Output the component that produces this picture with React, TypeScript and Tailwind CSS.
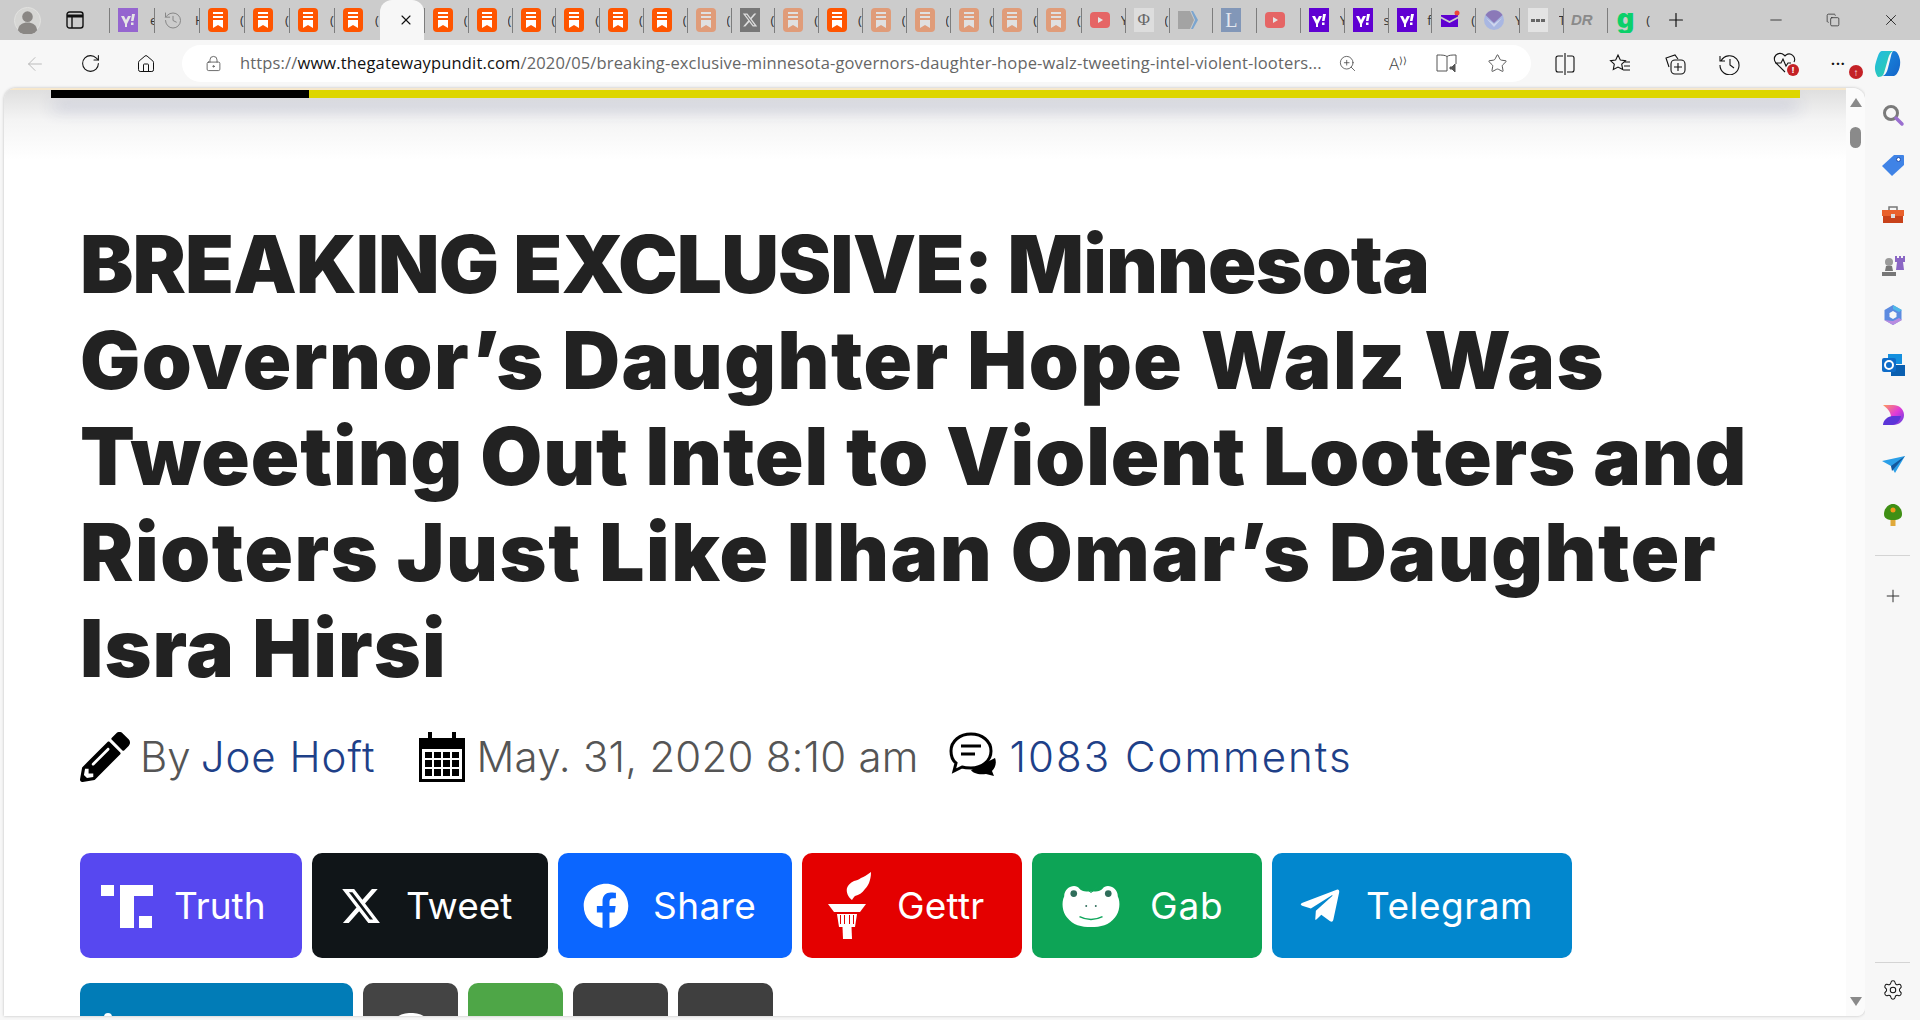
import React from "react";
import { ArrowLeft, RotateCw, House, LockKeyhole, ZoomIn, Star, Settings, Plus, X, Minus, History, Copy } from "lucide-react";
import { FaFacebook, FaTelegramPlane, FaPencilAlt } from "react-icons/fa";
import { FaXTwitter } from "react-icons/fa6";

function Bookmark({ faded }: { faded?: boolean }) {
  return (
    <svg viewBox="0 0 20 24" className={`h-6 w-5 ${faded ? "opacity-40" : ""}`}>
      <rect width="20" height="24" rx="4" fill="#ff5500" />
      <path d="M5 4h10v2H5zM5 8h10v2H5zM5 12h10v8l-5-3-5 3z" fill="#fff" />
    </svg>
  );
}
function Yahoo({ faded }: { faded?: boolean }) {
  return (
    <svg viewBox="0 0 20 24" className={`h-6 w-5 ${faded ? "opacity-50" : ""}`}>
      <rect width="20" height="24" fill="#6001d2" />
      <path d="M3 8h3l2 4 2-4h3l-4 8v3H7v-3zM14 6h3l-1.500 7h-2.500zM13 14.500h2.500v2.500H13z" fill="#fff" />
    </svg>
  );
}
function Yt() {
  return (
    <svg viewBox="0 0 20 24" className="h-6 w-5 opacity-50">
      <rect y="4" width="20" height="16" rx="4" fill="#f00" />
      <path d="M8 9l5 3-5 3z" fill="#fff" />
    </svg>
  );
}
function Favicon({ k }: { k: string }) {
  switch (k) {
    case "o": return <Bookmark />;
    case "f": return <Bookmark faded />;
    case "ya": return <Yahoo faded />;
    case "y": return <Yahoo />;
    case "yt": return <Yt />;
    case "h": return <History size={21} strokeWidth={1.100} className="text-[#808080]" />;
    case "x":
      return <span className="flex h-6 w-5 items-center justify-center bg-[#777] text-[#ddd]"><FaXTwitter size={16} /></span>;
    case "phi":
      return <span className="flex h-6 w-5 items-center justify-center bg-[#ddd] font-['Liberation_Serif',serif] text-[17px] text-[#666]">Φ</span>;
    case "arrow":
      return (
        <svg viewBox="0 0 20 24" className="h-6 w-5">
          <path d="M0 3h12l4 9-4 9H0z" fill="#a3a3a3" />
          <path d="M13 3h2l5 9-5 9h-2l4-9z" fill="#7ba5cf" />
        </svg>
      );
    case "L":
      return <span className="flex h-6 w-5 items-center justify-center bg-[#8297b8] font-['Liberation_Serif',serif] text-[20px] leading-none text-[#e4e8ef]">L</span>;
    case "mail":
      return (
        <svg viewBox="0 0 20 24" className="h-6 w-5">
          <path d="M1 7h17v1.500L9.500 13 1 8.500zM1 10.500L9.500 15 18 10.500V19H1z" fill="#5f01d1" />
          <circle cx="17" cy="5" r="2.500" fill="#f0443a" />
        </svg>
      );
    case "noaa":
      return (
        <svg viewBox="0 0 20 24" className="h-6 w-5">
          <circle cx="10" cy="12" r="10" fill="#a9b7e2" />
          <path d="M1.500 7A10 10 0 0 1 18.500 7L10 15z" fill="#8b79b8" />
          <path d="M2 10l8 6 8-6-8 9z" fill="#cfd6ee" />
        </svg>
      );
    case "dots":
      return (
        <span className="flex h-6 w-5 items-center justify-center gap-[1px] bg-[#e3e3e3]">
          <i className="h-[3px] w-[4px] bg-[#666]" /><i className="h-[3px] w-[4px] bg-[#666]" /><i className="h-[3px] w-[4px] bg-[#666]" />
        </span>
      );
    case "dr":
      return <span className="font-['Liberation_Sans',sans-serif] text-[15px] font-bold italic text-[#8a8a8a]">DR</span>;
    case "g":
      return <span className="font-['Inter',sans-serif] text-[27px] font-black leading-none text-[#0bd06a] -translate-y-[2px]">g</span>;
    default: return null;
  }
}

const tabs: [string, string][] = [
  ["ya", "e"], ["h", "H"], ["o", "("], ["o", "("], ["o", "("], ["o", "("],
];
const tabs2: [string, string][] = [
  ["o", "("], ["o", "("], ["o", "("], ["o", "("], ["o", "("], ["o", "("], ["f", "("], ["x", "("], ["f", "("], ["o", "("],
  ["f", "("], ["f", "("], ["f", "("], ["f", "("], ["f", "("], ["yt", "Y"], ["phi", "("], ["arrow", ""], ["L", ""], ["yt", ""],
  ["y", "Y"], ["y", "s"], ["y", "f"], ["mail", "("], ["noaa", "Y"], ["dots", "T"], ["dr", ""], ["g", "("],
];

function Tab({ k, g, wide }: { k: string; g: string; wide?: boolean }) {
  return (
    <div className={`flex h-[25px] items-center overflow-hidden border-l border-[#7d7d7d] pl-2 ${wide ? "w-[45px]" : "w-[43.800px]"}`}>
      <span className="flex w-5 shrink-0 items-center justify-center"><Favicon k={k} /></span>
      <span className="ml-auto w-[4px] overflow-hidden font-['Open_Sans',sans-serif] text-[13px] leading-none text-[#333]">{g}</span>
    </div>
  );
}

function TabStrip() {
  return (
    <div className="flex h-10 shrink-0 items-center bg-[#cccccc]">
      <svg viewBox="0 0 28 28" className="ml-[14px] h-[27px] w-[27px]">
        <circle cx="14" cy="14" r="13.500" fill="#d6d6d4" stroke="#e2e2e0" />
        <circle cx="14" cy="10" r="5.500" fill="#8a8784" />
        <path d="M4 24c1-6 5-8 10-8s9 2 10 8a13 13 0 0 1-20 0z" fill="#8a8784" />
      </svg>
      <svg viewBox="0 0 18 18" fill="none" stroke="#111" strokeWidth="1.400" className="ml-[25px] h-[18px] w-[18px]">
        <rect x="1" y="1" width="16" height="16" rx="2.500" />
        <path d="M1 5h16" strokeWidth="3" />
        <path d="M6 5v12" />
      </svg>
      <span className="w-[25px]" />
      {tabs.map(([k, g], i) => <Tab key={i} k={k} g={g} wide />)}
      <div className="ml-[1px] flex h-10 w-[44px] items-center justify-center rounded-t-xl bg-[#f7f7f7] pl-2">
        <X size={16} strokeWidth={1.700} className="text-[#111]" />
      </div>
      {tabs2.map(([k, g], i) => <Tab key={i} k={k} g={g} />)}
      <Plus size={22} strokeWidth={1.300} className="ml-[15px] text-[#111]" />
      <Minus size={18} strokeWidth={1} className="ml-[80px] text-[#111]" />
      <Copy size={14} strokeWidth={1.100} className="ml-[41px] text-[#111]" />
      <X size={18} strokeWidth={1.100} className="ml-[42px] text-[#111]" />
    </div>
  );
}

function Toolbar() {
  return (
    <div className="flex h-[48px] shrink-0 items-center bg-[#f7f7f7] pb-[1px]">
      <ArrowLeft size={22} strokeWidth={1} className="ml-[24px] text-[#b5b5b5]" />
      <RotateCw size={21} strokeWidth={1.200} className="ml-[34px] text-[#111]" />
      <House size={20} strokeWidth={1.200} className="ml-[35px] text-[#111]" />
      <div className="ml-[26px] flex h-[37px] w-[1349px] items-center rounded-full bg-white pl-[23px]">
        <LockKeyhole size={17} strokeWidth={1.100} className="text-[#444]" />
        <span className="ml-[18px] w-[1087px] overflow-hidden whitespace-nowrap font-['Open_Sans',sans-serif] text-[16.500px] tracking-[0.15px] text-[#666]">
          https://<span className="text-[#111]">www.thegatewaypundit.com</span>/2020/05/breaking-exclusive-minnesota-governors-daughter-hope-walz-tweeting-intel-violent-looters...
        </span>
        <ZoomIn size={19} strokeWidth={1} className="ml-[11px] text-[#444]" />
        <span className="ml-[32px] font-['Open_Sans',sans-serif] text-[17px] font-light leading-none text-[#444]">A<span className="text-[10px] align-top">⟩⟩</span></span>
        <svg viewBox="0 0 22 20" fill="none" stroke="#555" strokeWidth="1" className="ml-[29px] h-5 w-[22px]">
          <path d="M11 2.500C9 1 6 1 1 1v16h10V2.500c2-1.500 5-1.500 9-1.500v9" />
          <path d="M14 13h2l3-3v8l-3-3h-2z" fill="#555" />
        </svg>
        <Star size={21} strokeWidth={1} className="ml-[29px] text-[#444]" />
      </div>
      <svg viewBox="0 0 20 22" fill="none" stroke="#111" strokeWidth="1.100" className="ml-[24px] h-[22px] w-5">
        <path d="M8 3H3a2 2 0 0 0-2 2v12a2 2 0 0 0 2 2h5M12 3h5a2 2 0 0 1 2 2v12a2 2 0 0 1-2 2h-5M10 0v22" />
      </svg>
      <svg viewBox="0 0 22 22" fill="none" stroke="#111" strokeWidth="1.100" className="ml-[34px] h-[22px] w-[22px]">
        <path d="M9 2l2.300 5 5.200.6-3.800 3.600 1 5.300L9 14l-4.700 2.500 1-5.300L1.500 7.600 6.700 7zM15 9h6M15 13h6M14 17h7" />
      </svg>
      <svg viewBox="0 0 22 22" fill="none" stroke="#111" strokeWidth="1.100" className="ml-[33px] h-[22px] w-[22px]">
        <path d="M5 14L2 5l9-3 3 4" />
        <rect x="7" y="7" width="14" height="14" rx="4" />
        <path d="M14 10v8M10 14h8" />
      </svg>
      <svg viewBox="0 0 22 22" fill="none" stroke="#111" strokeWidth="1.100" className="ml-[32px] h-[22px] w-[22px]">
        <path d="M2 3v5h5M3 8a9.500 9.500 0 1 1-1 4M12 6v6l4 3" />
      </svg>
      <div className="relative ml-[33px] h-[24px] w-[24px]">
        <svg viewBox="0 0 24 22" fill="none" stroke="#111" strokeWidth="1.100" className="h-[22px] w-[24px]">
          <path d="M12 20L3 11a5.500 5.500 0 0 1 8-8l1 1 1-1a5.500 5.500 0 0 1 8 7M2 11h6l2-4 3 7 2-3h3" />
        </svg>
        <span className="absolute bottom-0 right-[-2px] flex h-3 w-3 items-center justify-center rounded-full bg-[#c42126] text-[9px] font-bold leading-none text-white">!</span>
      </div>
      <div className="relative ml-[34px] flex h-[24px] w-[26px] items-center">
        <span className="text-[14px] font-bold leading-none tracking-[1px] text-[#111]">···</span>
        <span className="absolute bottom-[-3px] right-[-6px] flex h-[14px] w-[14px] items-center justify-center rounded-full bg-[#c42126] text-[10px] font-bold leading-none text-white">↑</span>
      </div>
      <svg viewBox="0 0 26 32" className="ml-[16px] h-8 w-[28px]">
        <defs>
          <linearGradient id="cp1" x1="0" y1="0" x2="1" y2="1"><stop offset="0" stopColor="#22b8e6" /><stop offset="1" stopColor="#2ed3a0" /></linearGradient>
          <linearGradient id="cp2" x1="0" y1="0" x2="1" y2="1"><stop offset="0" stopColor="#1a8be0" /><stop offset="1" stopColor="#1464c8" /></linearGradient>
        </defs>
        <path d="M8 3h12c-3 0-5 4-6 8l-4 14c-1 3-3 4-6 4-3-4-4-9-2-15 2-6 3-11 6-11z" fill="url(#cp1)" />
        <path d="M20 3c3 0 5 4 6 9 1 6-2 15-6 16H8c3 0 5-4 6-8l3-12c.5-3 1.500-5 3-5z" fill="url(#cp2)" />
      </svg>
    </div>
  );
}

function Sidebar() {
  const cell = "flex h-[50px] items-center justify-center";
  return (
    <div className="flex flex-1 flex-col items-center bg-[#f7f7f7] pt-[2px]">
      <div className={cell}>
        <svg viewBox="0 0 24 24" className="h-6 w-6" fill="none"><circle cx="10" cy="10" r="6.500" stroke="#7a7a7a" strokeWidth="3" /><path d="M15 15l6 6" stroke="#9a6fd0" strokeWidth="3.500" strokeLinecap="round" /></svg>
      </div>
      <div className={cell}>
        <svg viewBox="0 0 24 24" className="h-6 w-6"><path d="M13 2h9a1 1 0 0 1 1 1v9L11 23 1 13z" fill="#3f83e6" /><circle cx="17.500" cy="6.500" r="2" fill="#fff" stroke="#1d4fb0" /></svg>
      </div>
      <div className={cell}>
        <svg viewBox="0 0 24 24" className="h-6 w-6"><path d="M8 7V4h8v3" fill="none" stroke="#777" strokeWidth="1.500" /><path d="M1 7h22v6H1z" fill="#e9612c" /><path d="M2 13h20v7H2z" fill="#c8421a" /><rect x="10" y="11" width="4" height="4" fill="#ddd" /></svg>
      </div>
      <div className={cell}>
        <svg viewBox="0 0 24 24" className="h-6 w-6"><path d="M14 3h2v2h2V3h2v2h2V3h2v6h-2l1 8h-8l1-8h-2z" fill="#8a66c4" /><circle cx="8" cy="9" r="4" fill="#9a9a9a" /><path d="M5 13h6l1 5H4zM1 19h14v4H1z" fill="#777" /></svg>
      </div>
      <div className={cell}>
        <svg viewBox="0 0 24 24" className="h-6 w-6" fill="none"><path d="M12 5l6 3.500v7L12 19l-6-3.500v-7z" stroke="#5c8be0" strokeWidth="5" /><path d="M12 2l9 5-3 2-6-3z" fill="#4fb8e8" /><path d="M3 17l9 5 9-5-3-2-6 3z" fill="#b98be0" /></svg>
      </div>
      <div className={cell}>
        <svg viewBox="0 0 24 24" className="h-6 w-6"><path d="M7 1h14v10H7z" fill="#1490df" /><path d="M10 12h14v11H10z" fill="#0a5fb0" /><rect x="1" y="5" width="14" height="14" rx="2" fill="#0f6cc8" /><circle cx="8" cy="12" r="4" fill="none" stroke="#fff" strokeWidth="2" /></svg>
      </div>
      <div className={cell}>
        <svg viewBox="0 0 24 24" className="h-6 w-6"><defs><linearGradient id="dz" x1="0" y1="0" x2="1" y2="1"><stop offset="0" stopColor="#ff9a5a" /><stop offset=".5" stopColor="#e03bd8" /><stop offset="1" stopColor="#5a3fe0" /></linearGradient></defs><path d="M2 2h10c6 0 11 4 11 10s-5 10-11 10H3c4-1 7-4 7-8 0-5-4-9-8-12z" fill="url(#dz)" /><path d="M2 22c0-5 5-9 10-9h8c-1 5-5 9-9 9z" fill="#5b35d8" /></svg>
      </div>
      <div className={cell}>
        <svg viewBox="0 0 24 24" className="h-6 w-6"><path d="M1 8l23-5-10 17-4-7z" fill="#2b9fe8" /><path d="M10 13l14-10-13 15z" fill="#13589e" /></svg>
      </div>
      <div className={cell}>
        <svg viewBox="0 0 24 24" className="h-6 w-6"><path d="M12 1c5 0 9 5 9 10 0 4-3 6-9 6s-9-2-9-6C3 6 7 1 12 1z" fill="#3f8f14" /><rect x="9.500" y="17" width="5" height="6" fill="#e0a93a" /><circle cx="12" cy="7" r="2.500" fill="#f09a1a" /></svg>
      </div>
      <div className="mt-[15px] w-[35px] border-t border-[#d4d4d4]" />
      <Plus size={20} strokeWidth={1.200} className="mt-[30px] text-[#333]" />
      <div className="mt-[356px] w-[35px] border-t border-[#d4d4d4]" />
      <Settings size={22} strokeWidth={1.100} className="mt-[16px] text-[#111]" />
    </div>
  );
}

function Truth() {
  return (
    <svg viewBox="0 0 52 44" className="h-[44px] w-[52px]" fill="#fff">
      <path d="M0 1h13v11H0zM19 1h33v11H33v32H19zM38 32h13v12H38z" />
    </svg>
  );
}
function Torch() {
  return (
    <svg viewBox="0 0 44 68" className="h-[68px] w-[44px]" fill="#fff">
      <path d="M43 0c0 5-1 8-2 11-1 2-2 4-4 6-3 4-6 6-10 7-1 1-2 2-3 4-4-3-6-8-5-12 1-3 3-5 7-7 3-1 4-1 7-3 3-1 6-3 10-6z" />
      <path d="M0 32h38l-6 8H6z" />
      <path d="M9 42h20l-2 13h-2l-1 0h-10l-1 0h-2z" />
      <path d="M12 43h1v9h-1zM16 43h1v9h-1zM21 43h1v9h-1zM25 43h1v9h-1z" fill="#e40000" />
      <path d="M14.500 55h9l.5 12h-9z" />
    </svg>
  );
}
function Frog() {
  return (
    <svg viewBox="0 0 60 48" className="h-[46px] w-[60px]">
      <path d="M2 14C2 4 14 0 18 6c2 2 4 3 12 3s10-1 12-3c4-6 16-2 16 8 3 6 2 16-3 22-6 8-15 10-25 10S11 44 5 36C0 30-1 20 2 14z" fill="#fff" />
      <circle cx="12" cy="11" r="3.500" fill="#2f6d5a" /><circle cx="48" cy="11" r="3.500" fill="#2f6d5a" />
      <path d="M23 4l7 6 7-6" fill="none" stroke="#0ea55a" strokeWidth="1" />
      <path d="M18 35c8 4 16 4 24 0" fill="none" stroke="#0ea55a" strokeWidth="1.500" />
      <circle cx="25" cy="24" r="1" fill="#2f6d5a" /><circle cx="35" cy="24" r="1" fill="#2f6d5a" />
    </svg>
  );
}

function Btn({ w, bg, icon, label, iw, tw }: { w: string; bg: string; icon: React.ReactNode; label: string; iw: string; tw: string }) {
  return (
    <div className={`flex h-[105px] items-center rounded-[10px] ${w} ${bg}`}>
      <span className={`flex shrink-0 items-center justify-center ${iw}`}>{icon}</span>
      <span className={`font-['Inter',sans-serif] text-[37px] leading-none text-white ${tw}`}>{label}</span>
    </div>
  );
}

function Article() {
  return (
    <div className="min-w-0 flex-1 overflow-hidden border-t-2 border-[#f6e7cc] bg-[linear-gradient(180deg,#dfdfdf_0,#f4f4f4_30px,#ffffff_70px)]">
      <div className="ml-[47px] flex h-2 w-[1749px] shadow-[0_12px_16px_-2px_rgba(150,155,190,0.9)]">
        <div className="w-[258px] bg-black" />
        <div className="flex-1 bg-[#ddd600]" />
      </div>
      <h1 className="ml-[76px] mt-[118px] font-['Inter',sans-serif] text-[80px] font-black leading-[96px] text-[#222222] whitespace-nowrap">
        <span className="block tracking-[-0.9px]">BREAKING EXCLUSIVE: Minnesota</span>
        <span className="block tracking-[1.5px]">Governor’s Daughter Hope Walz Was</span>
        <span className="block tracking-[0.95px]">Tweeting Out Intel to Violent Looters and</span>
        <span className="block tracking-[1.55px]">Rioters Just Like Ilhan Omar’s Daughter</span>
        <span className="block tracking-[1.1px]">Isra Hirsi</span>
      </h1>
      <div className="ml-[76px] mt-[36px] flex h-[50px] items-center font-['Inter',sans-serif] text-[42px] font-light leading-none text-[#555555]">
        <FaPencilAlt size={50} className="text-black" />
        <span className="ml-[10px]">By </span>
        <span className="ml-[10px] tracking-[1px] text-[#1e4088]">Joe Hoft</span>
        <svg viewBox="0 0 46 50" className="ml-[43px] h-[50px] w-[46px]">
          <path d="M0 6h9V0h4v6h20V0h4v6h9v44H0z" />
          <path d="M3 17h40v30H3z" fill="#fff" />
          <path d="M6 20h7v6H6zM15 20h7v6h-7zM24 20h7v6h-7zM33 20h7v6h-7zM6 28h7v7H6zM15 28h7v7h-7zM24 28h7v7h-7zM33 28h7v7h-7zM6 37h7v7H6zM15 37h7v7h-7zM24 37h7v7h-7zM33 37h7v7h-7z" />
        </svg>
        <span className="ml-[12px] tracking-[0.2px]">May. 31, 2020 8:10 am</span>
        <svg viewBox="0 0 50 44" className="ml-[30px] h-[44px] w-[50px] -translate-y-[3px]">
          <path d="M22 38c2 3 7 5 15 4l8 2-2-5c3-3 5-8 3-13z" />
          <path d="M22 2c11 0 20 7 20 17s-9 17-20 17c-3 0-6 0-9-1l-8 4 2-8C3 28 2 24 2 19 2 9 11 2 22 2z" fill="#fff" stroke="#000" strokeWidth="3" />
          <path d="M12 14h20M12 22h14" stroke="#000" strokeWidth="3" />
        </svg>
        <span className="ml-[11px] tracking-[2px] text-[#1e4088]">1083 Comments</span>
      </div>
      <div className="ml-[76px] mt-[71px] flex gap-[10px]">
        <Btn w="w-[222px]" bg="bg-[#5748f0]" icon={<Truth />} label="Truth" iw="w-[94px]" tw="" />
        <Btn w="w-[236px]" bg="bg-[#101518]" icon={<FaXTwitter size={42} className="text-white" />} label="Tweet" iw="w-[97px]" tw="-ml-[3px]" />
        <Btn w="w-[234px]" bg="bg-[#0b66ff]" icon={<FaFacebook size={46} className="text-white" />} label="Share" iw="w-[95px]" tw="tracking-[0.4px]" />
        <Btn w="w-[220px]" bg="bg-[#e40000]" icon={<Torch />} label="Gettr" iw="w-[95px]" tw="tracking-[0.2px]" />
        <Btn w="w-[230px]" bg="bg-[#0da456]" icon={<Frog />} label="Gab" iw="w-[118px]" tw="tracking-[0.8px]" />
        <Btn w="w-[300px]" bg="bg-[#0287ce]" icon={<FaTelegramPlane size={44} className="text-white" />} label="Telegram" iw="w-[95px]" tw="-ml-[1px] tracking-[0.5px]" />
      </div>
      <div className="ml-[76px] mt-[25px] flex gap-[10px]">
        <div className="h-[105px] w-[273px] rounded-[10px] bg-[#017cb7] pl-[24px] pt-[30px]">
          <div className="h-[10px] w-[8px] rounded-t-full bg-white" />
        </div>
        <div className="h-[105px] w-[95px] rounded-[10px] bg-[#444444] pt-[30px]">
          <div className="mx-auto h-[40px] w-[44px] rounded-full bg-white" />
        </div>
        <div className="h-[105px] w-[95px] rounded-[10px] bg-[#4ea647]" />
        <div className="h-[105px] w-[95px] rounded-[10px] bg-[#3f3f3f]" />
        <div className="h-[105px] w-[95px] rounded-[10px] bg-[#3f3f3f]" />
      </div>
    </div>
  );
}

function Scrollbar() {
  return (
    <div className="flex w-[19px] shrink-0 flex-col items-center bg-[#fbfbfb] pt-[10px] pb-[10px]">
      <div className="h-0 w-0 border-x-[6.500px] border-b-[9px] border-x-transparent border-b-[#8a8a8a]" />
      <div className="mt-[20px] h-[21px] w-[11px] rounded-full bg-[#8a8a8a]" />
      <div className="mt-auto h-0 w-0 border-x-[6.500px] border-t-[9px] border-x-transparent border-t-[#8a8a8a]" />
    </div>
  );
}

export default function App() {
  return (
    <div className="flex h-[1020px] w-[1920px] flex-col overflow-hidden bg-[#f7f7f7]">
      <TabStrip />
      <Toolbar />
      <div className="flex min-h-0 flex-1">
        <div className="ml-[4px] mb-[4px] flex w-[1861px] overflow-hidden rounded-t-xl rounded-br-lg shadow-[0_0_3px_#bbb]">
          <Article />
          <Scrollbar />
        </div>
        <Sidebar />
      </div>
    </div>
  );
}
